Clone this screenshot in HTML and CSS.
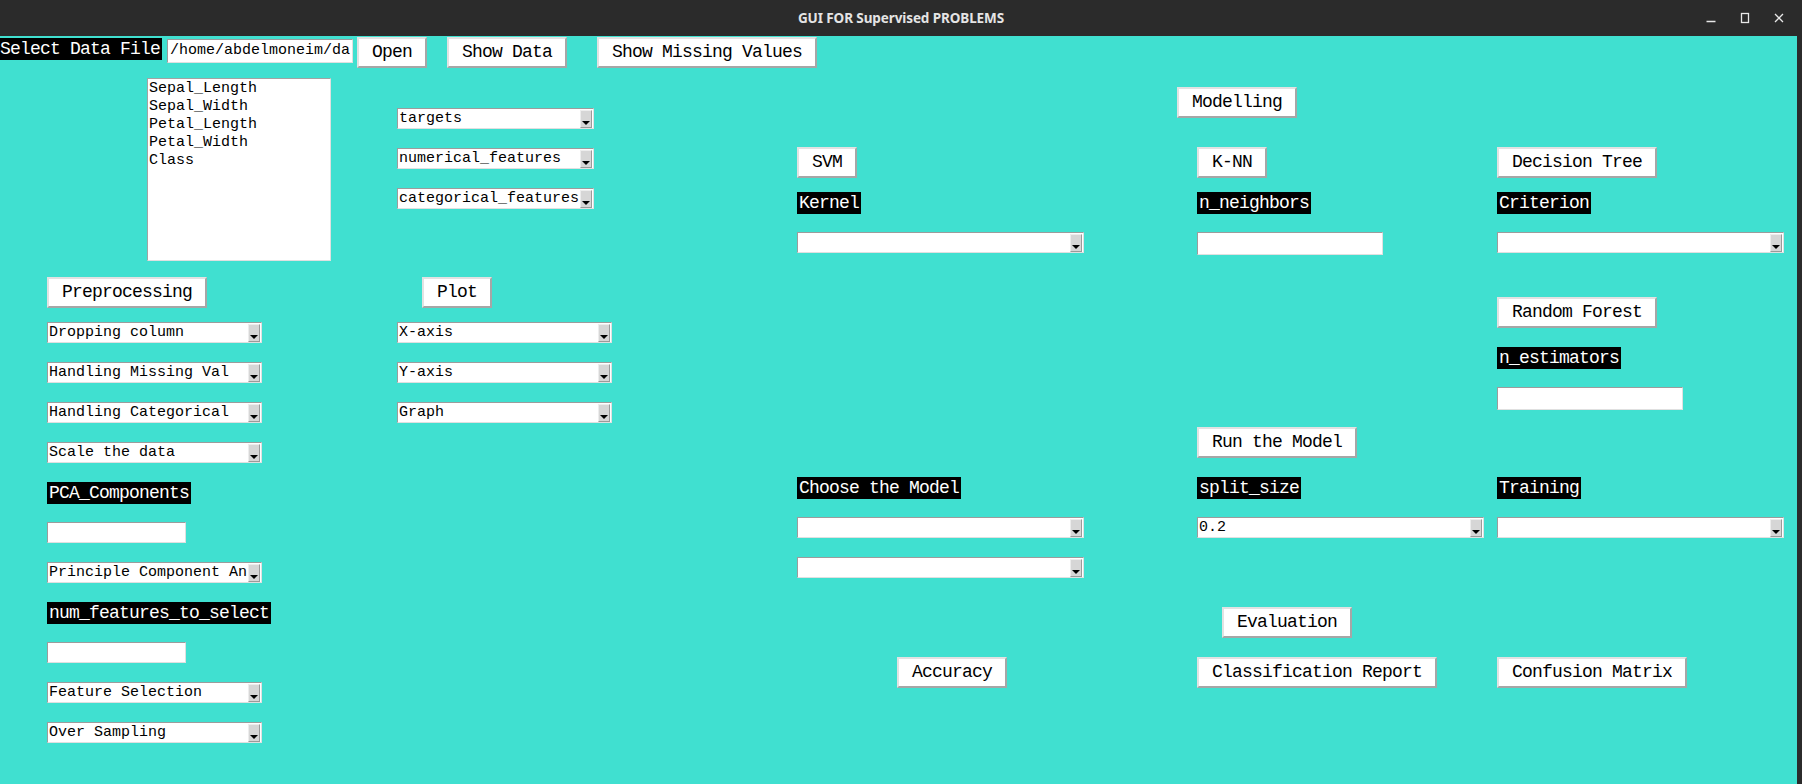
FILE: index.html
```html
<!DOCTYPE html>
<html lang="en">
<head>
<meta charset="utf-8">
<title>GUI FOR Supervised PROBLEMS</title>
<link rel="stylesheet" href="styles.css">
</head>
<body>
<div class="frame">
  <header class="titlebar">
    <div class="tb-spacer"></div>
    <div class="title">GUI FOR Supervised PROBLEMS</div>
    <div class="controls">
      <span class="ctl"><svg width="12" height="12" viewBox="0 0 12 12"><line x1="1.5" y1="9.5" x2="10.5" y2="9.5" stroke="#e8e8e8" stroke-width="1.5"/></svg></span>
      <span class="ctl"><svg width="12" height="12" viewBox="0 0 12 12"><rect x="2.5" y="1.5" width="7" height="9" fill="none" stroke="#e8e8e8" stroke-width="1.3"/></svg></span>
      <span class="ctl"><svg width="12" height="12" viewBox="0 0 12 12"><path d="M2 2 L10 10 M10 2 L2 10" stroke="#e8e8e8" stroke-width="1.3"/></svg></span>
    </div>
  </header>

  <main class="content">
    <div class="toprow">
      <span class="lbl lbl-file">Select Data File</span>
      <div class="entry entry-path">/home/abdelmoneim/da</div>
      <button class="btn btn-open">Open</button>
      <button class="btn btn-show">Show Data</button>
      <button class="btn btn-missing">Show Missing Values</button>
    </div>

    <div class="panels">
      <section class="left">
        <div class="listbox">
          <div>Sepal_Length</div>
          <div>Sepal_Width</div>
          <div>Petal_Length</div>
          <div>Petal_Width</div>
          <div>Class</div>
        </div>
        <div class="feature-combos">
          <div class="combo w197"><span class="val">targets</span><span class="arrow"></span></div>
          <div class="combo w197"><span class="val">numerical_features</span><span class="arrow"></span></div>
          <div class="combo w197"><span class="val">categorical_features</span><span class="arrow"></span></div>
        </div>

        <div class="btn-cell"><button class="btn">Preprocessing</button></div>
        <div class="btn-cell plot-cell"><button class="btn">Plot</button></div>

        <div class="stack">
          <div class="combo w215"><span class="val">Dropping column</span><span class="arrow"></span></div>
          <div class="combo w215"><span class="val">Handling Missing Val</span><span class="arrow"></span></div>
          <div class="combo w215"><span class="val">Handling Categorical</span><span class="arrow"></span></div>
          <div class="combo w215"><span class="val">Scale the data</span><span class="arrow"></span></div>
          <div><span class="lbl">PCA_Components</span></div>
          <div class="entry entry-small"></div>
          <div class="combo w215"><span class="val">Principle Component An</span><span class="arrow"></span></div>
          <div><span class="lbl">num_features_to_select</span></div>
          <div class="entry entry-small"></div>
          <div class="combo w215"><span class="val">Feature Selection</span><span class="arrow"></span></div>
          <div class="combo w215"><span class="val">Over Sampling</span><span class="arrow"></span></div>
        </div>
        <div class="stack">
          <div class="combo w215"><span class="val">X-axis</span><span class="arrow"></span></div>
          <div class="combo w215"><span class="val">Y-axis</span><span class="arrow"></span></div>
          <div class="combo w215"><span class="val">Graph</span><span class="arrow"></span></div>
        </div>
      </section>

      <section class="right">
        <div class="cell r1 c2 shift-left"><button class="btn">Modelling</button></div>

        <div class="cell r2 c1"><button class="btn">SVM</button></div>
        <div class="cell r2 c2"><button class="btn">K-NN</button></div>
        <div class="cell r2 c3"><button class="btn">Decision Tree</button></div>

        <div class="cell r3 c1"><span class="lbl">Kernel</span></div>
        <div class="cell r3 c2"><span class="lbl">n_neighbors</span></div>
        <div class="cell r3 c3"><span class="lbl">Criterion</span></div>

        <div class="cell r4 c1"><div class="combo w287"><span class="val"></span><span class="arrow"></span></div></div>
        <div class="cell r4 c2"><div class="entry entry-wide"></div></div>
        <div class="cell r4 c3"><div class="combo w287"><span class="val"></span><span class="arrow"></span></div></div>

        <div class="cell r5 c3"><button class="btn">Random Forest</button></div>
        <div class="cell r6 c3"><span class="lbl">n_estimators</span></div>
        <div class="cell r7 c3"><div class="entry entry-wide"></div></div>

        <div class="cell r8 c2"><button class="btn">Run the Model</button></div>

        <div class="cell r9 c1"><span class="lbl">Choose the Model</span></div>
        <div class="cell r9 c2"><span class="lbl">split_size</span></div>
        <div class="cell r9 c3"><span class="lbl">Training</span></div>

        <div class="cell r10 c1"><div class="combo w287"><span class="val"></span><span class="arrow"></span></div></div>
        <div class="cell r10 c2"><div class="combo w287"><span class="val">0.2</span><span class="arrow"></span></div></div>
        <div class="cell r10 c3"><div class="combo w287"><span class="val"></span><span class="arrow"></span></div></div>

        <div class="cell r11 c1"><div class="combo w287"><span class="val"></span><span class="arrow"></span></div></div>

        <div class="cell r12 c2 shift-eval"><button class="btn">Evaluation</button></div>

        <div class="cell r13 c1 shift-acc"><button class="btn">Accuracy</button></div>
        <div class="cell r13 c2"><button class="btn">Classification Report</button></div>
        <div class="cell r13 c3"><button class="btn">Confusion Matrix</button></div>
      </section>
    </div>
  </main>
</div>
</body>
</html>
```

FILE: styles.css
```css
* { box-sizing: border-box; }

html, body {
  margin: 0;
  padding: 0;
  background: #2b2b2b;
}

.frame {
  width: 1802px;
  height: 784px;
  background: #2b2b2b;
  overflow: hidden;
}

/* ---------- title bar ---------- */
.titlebar {
  height: 36px;
  display: grid;
  grid-template-columns: 1fr auto 1fr;
  align-items: center;
  background: #2b2b2b;
}

.title {
  font-family: "Noto Sans", "Open Sans", sans-serif;
  font-weight: 700;
  font-size: 13.5px;
  color: #e4e4e4;
  letter-spacing: -0.1px;
}

.controls {
  justify-self: end;
  display: flex;
  margin-right: 6px;
}

.ctl {
  width: 34px;
  height: 36px;
  display: flex;
  align-items: center;
  justify-content: center;
}

/* ---------- content ---------- */
.content {
  width: 1797px;
  height: 748px;
  background: #40e0d0;
}

.toprow {
  display: flex;
  align-items: flex-start;
  height: 32px;
  padding-top: 1px;
}

.panels {
  display: flex;
  align-items: flex-start;
}

/* ---------- widgets ---------- */
.lbl {
  display: inline-block;
  height: 22px;
  padding: 0 2px;
  background: #000;
  color: #fff;
  font-family: "Liberation Mono", "DejaVu Sans Mono", monospace;
  font-size: 18px;
  letter-spacing: -0.8px;
  line-height: 22px;
  white-space: nowrap;
}

.btn {
  display: inline-block;
  height: 31px;
  margin: 0;
  padding: 0 13px;
  background: #fff;
  color: #000;
  border: 2px solid;
  border-color: #e2e2e2 #a6a6a6 #a6a6a6 #e2e2e2;
  border-radius: 0;
  font-family: "Liberation Mono", "DejaVu Sans Mono", monospace;
  font-size: 18px;
  letter-spacing: -0.8px;
  line-height: 27px;
  white-space: nowrap;
}

.entry {
  background: #fff;
  border: 1px solid;
  border-color: #9c9c9c #e0e0e0 #e0e0e0 #9c9c9c;
  font-family: "Liberation Mono", "DejaVu Sans Mono", monospace;
  font-size: 15px;
  line-height: 20px;
  color: #000;
  padding-left: 2px;
  white-space: nowrap;
  overflow: hidden;
}

.entry-path { width: 186px; height: 24px; margin: 2px 0 0 5px; line-height: 22px; }
.entry-small { width: 139px; height: 21px; }
.entry-wide { width: 186px; height: 23px; }

.combo {
  display: flex;
  height: 21px;
  background: #fff;
  border: 1px solid;
  border-color: #9c9c9c #e0e0e0 #e0e0e0 #9c9c9c;
  font-family: "Liberation Mono", "DejaVu Sans Mono", monospace;
  font-size: 15px;
  line-height: 20px;
  color: #000;
}

.combo .val {
  flex: 1;
  padding-left: 1px;
  overflow: hidden;
  white-space: nowrap;
}

.combo .arrow {
  flex: none;
  width: 12px;
  margin: 1px 1px 0 0;
  background: #d6d6d6;
  border: 1px solid;
  border-color: #ededed #9a9a9a #9a9a9a #ededed;
  display: flex;
  align-items: flex-end;
  justify-content: center;
  padding-bottom: 2px;
}

.combo .arrow::after {
  content: "";
  border-left: 4px solid transparent;
  border-right: 4px solid transparent;
  border-top: 4px solid #000;
}

.w197 { width: 197px; }
.w215 { width: 215px; }
.w287 { width: 287px; }

/* ---------- top row ---------- */
.lbl-file { margin: 1px 0 0 -2px; }
.btn-open { margin-left: 4px; }
.btn-show { margin-left: 20px; }
.btn-missing { margin-left: 30px; }

/* ---------- left panel ---------- */
.left {
  width: 797px;
  flex: none;
  display: grid;
  grid-template-columns: 350px 400px;
  align-items: start;
  padding-left: 47px;
}

.listbox {
  width: 184px;
  height: 183px;
  margin: 10px 0 0 100px;
  padding: 1px 0 0 1px;
  background: #fff;
  border: 1px solid;
  border-color: #a3a3a3 #e0e0e0 #e0e0e0 #a3a3a3;
  font-family: "Liberation Mono", "DejaVu Sans Mono", monospace;
  font-size: 15px;
  line-height: 18px;
  color: #000;
}

.feature-combos {
  margin-top: 40px;
  display: grid;
  grid-auto-rows: 40px;
  align-items: start;
}

.btn-cell { margin-top: 16px; }
.plot-cell { padding-left: 25px; }

.stack {
  margin-top: 14px;
  display: grid;
  grid-auto-rows: 40px;
  align-items: start;
}

/* ---------- right panel ---------- */
.right {
  width: 1000px;
  flex: none;
  display: grid;
  grid-template-columns: 400px 300px 300px;
  grid-template-rows: 60px 45px 40px 65px 50px 40px 40px 50px 40px 40px 50px 50px 40px;
  align-items: start;
  padding-top: 19px;
}

.r1 { grid-row: 1; }
.r2 { grid-row: 2; }
.r3 { grid-row: 3; }
.r4 { grid-row: 4; }
.r5 { grid-row: 5; }
.r6 { grid-row: 6; }
.r7 { grid-row: 7; }
.r8 { grid-row: 8; }
.r9 { grid-row: 9; }
.r10 { grid-row: 10; }
.r11 { grid-row: 11; }
.r12 { grid-row: 12; }
.r13 { grid-row: 13; }
.c1 { grid-column: 1; }
.c2 { grid-column: 2; }
.c3 { grid-column: 3; }

.shift-left { margin-left: -20px; }
.shift-eval { margin-left: 25px; }
.shift-acc { margin-left: 100px; }
```
